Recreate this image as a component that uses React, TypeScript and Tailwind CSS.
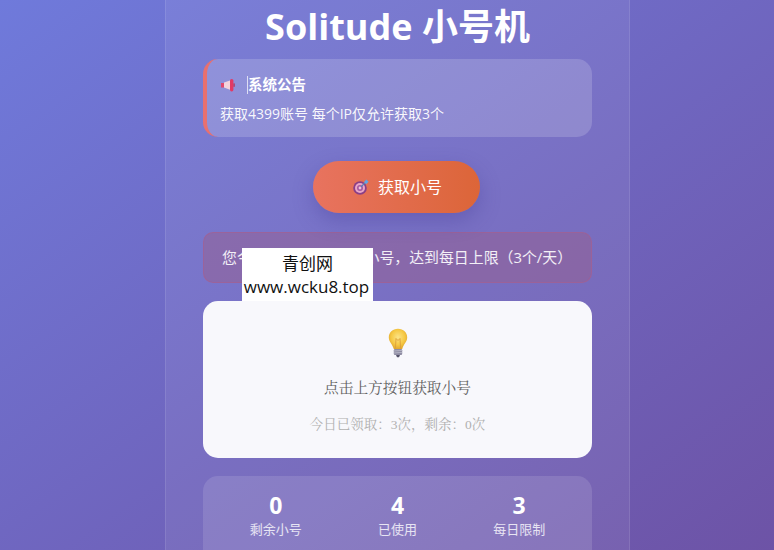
import React from 'react';

const SANS = "font-['Open_Sans','Noto_Sans_CJK_SC',sans-serif]";

const Megaphone: React.FC = () => (
  <svg width="16" height="14" viewBox="0 0 16 14" className="shrink-0">
    <rect x="1" y="5" width="3" height="4.5" fill="#e0486f" />
    <path d="M4 4.6 L10 2.4 L10 11.8 L4 9.6 Z" fill="#f3d3dc" />
    <rect x="10" y="1" width="3.4" height="12.4" rx="1.6" fill="#e23a66" />
    <rect x="13.4" y="5.4" width="1.4" height="3.4" fill="#b9395f" />
  </svg>
);

const Target: React.FC = () => (
  <svg width="18" height="18" viewBox="0 0 18 18" className="shrink-0">
    <circle cx="8" cy="10" r="6.8" fill="#8a3f86" />
    <circle cx="8" cy="10" r="5" fill="#e9a6c6" />
    <circle cx="8" cy="10" r="3" fill="#a8589f" />
    <circle cx="8" cy="10" r="1.4" fill="#eec4d8" />
    <path d="M9 9 L13 4.6" stroke="#5a7fb8" strokeWidth="1.2" />
    <path d="M12 4 L14.4 1.6 L16.6 3.8 L14.2 6.2 Z" fill="#5fa5e6" />
  </svg>
);

const Bulb: React.FC = () => (
  <svg width="20" height="30" viewBox="0 0 20 30">
    <defs>
      <radialGradient id="bulbGlow" cx="0.5" cy="0.42" r="0.6">
        <stop offset="0" stopColor="#fbe487" />
        <stop offset="0.6" stopColor="#f6c945" />
        <stop offset="1" stopColor="#dfa52c" />
      </radialGradient>
    </defs>
    <path d="M10 0.8 C4.6 0.8 0.8 4.6 0.8 9.4 C0.8 13.6 4.4 16 5.8 21 L14.2 21 C15.6 16 19.2 13.6 19.2 9.4 C19.2 4.6 15.4 0.8 10 0.8 Z" fill="url(#bulbGlow)" />
    <path d="M7.4 20.6 L8 10.5 L10 12.5 L12 10.5 L12.6 20.6" fill="none" stroke="#dd9f3a" strokeWidth="0.9" />
    <rect x="5.8" y="21" width="8.4" height="6" rx="1.2" fill="#8f8da3" />
    <path d="M5.8 23 L14.2 22.4 M5.8 25 L14.2 24.4" stroke="#bdbccb" strokeWidth="0.8" />
    <path d="M8 27 L12 27 L11 29.2 L9 29.2 Z" fill="#55536a" />
  </svg>
);

const stats = [
  { value: '0', label: '剩余小号' },
  { value: '4', label: '已使用' },
  { value: '3', label: '每日限制' },
];

const App: React.FC = () => {
  return (
    <div className={`relative h-[550px] w-full overflow-hidden bg-gradient-to-br from-[#6f7adb] to-[#6d53a6] ${SANS}`}>
      <div className="-mt-[24px] ml-[165px] w-[465px] rounded-[20px] border border-white/10 bg-white/[0.07] px-[37px] pt-[24px] pb-[40px]">
        <h1 className="-mt-[1px] h-[54px] text-center text-[36px] leading-[54px] font-bold text-white">Solitude 小号机</h1>

        <div className="mt-[5px] h-[78px] rounded-[15px] border-l-4 border-[#e8706f] bg-white/[0.17] pl-[13px] pt-[14px]">
          <div className="flex h-[24px] items-center text-[14.5px] font-bold text-white">
            <Megaphone />
            <span className="ml-[11px] border-l border-white/70 leading-[18px]">系统公告</span>
          </div>
          <p className="mt-[5px] text-[14px] leading-[24px] text-white/95">获取4399账号 每个IP仅允许获取3个</p>
        </div>

        <div className="mt-[24px] flex justify-center">
          <button className="-ml-[2px] flex h-[52px] w-[167px] items-center justify-center gap-[8px] rounded-full bg-gradient-to-r from-[#e8735f] to-[#dc6538] pl-[1px] text-[16px] text-white shadow-[0_8px_20px_rgba(70,60,150,0.35)]">
            <Target />
            获取小号
          </button>
        </div>

        <div className="mt-[19px] h-[51px] rounded-[10px] border border-[#a85f8f]/60 bg-[#98608f]/50 pl-[18px] text-[14.9px] leading-[49px] text-white/90">
          您今日已经领取了3个小号，达到每日上限（3个/天）
        </div>

        <div className="mt-[18px] flex h-[157px] flex-col items-center rounded-[15px] bg-[#f8f8fc] pt-[27px] font-['Liberation_Serif','Noto_Serif_CJK_SC',serif]">
          <Bulb />
          <p className="mt-[18px] text-[14.7px] leading-[24px] text-[#5f5f5f]">点击上方按钮获取小号</p>
          <p className="mt-[13px] text-[13.5px] leading-[24px] text-[#b0b0b0]">今日已领取：3次，剩余：0次</p>
        </div>

        <div className="mt-[18px] grid h-[90px] grid-cols-3 rounded-[15px] bg-white/[0.12] px-[12px] pt-[16px]">
          {stats.map(s => (
            <div key={s.label} className="text-center">
              <div className="text-[23px] leading-[27px] font-bold text-white">{s.value}</div>
              <div className="text-[13px] leading-[20px] text-white/80">{s.label}</div>
            </div>
          ))}
        </div>
      </div>

      <div className="absolute top-[248px] left-[242px] h-[53px] w-[131px] bg-white pt-[4px] text-center text-[17px] leading-[23px] text-[#111] whitespace-nowrap">
        <div>青创网</div>
        <div className="pr-[2px]">www.wcku8.top</div>
      </div>
    </div>
  );
};

export default App;
